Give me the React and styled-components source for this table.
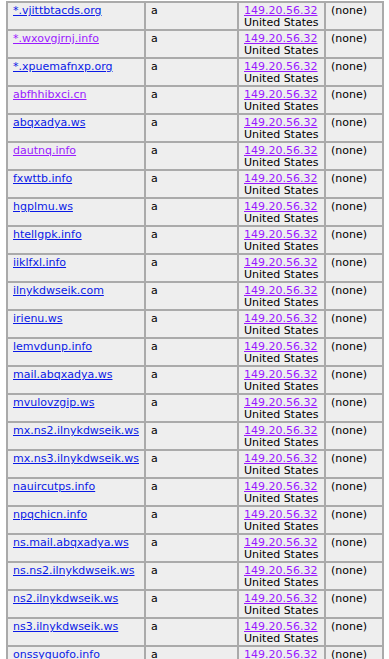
import React from "react";
import styled, { createGlobalStyle } from "styled-components";

const GlobalStyle = createGlobalStyle`
  body {
    margin: 0;
    background: #ffffff;
    font-family: "DejaVu Sans", Verdana, sans-serif;
  }
`;

const rows = [
  { host: "*.vjittbtacds.org" },
  { host: "*.wxovgjrnj.info", visited: true },
  { host: "*.xpuemafnxp.org" },
  { host: "abfhhibxci.cn", visited: true },
  { host: "abqxadya.ws" },
  { host: "dautnq.info", visited: true },
  { host: "fxwttb.info" },
  { host: "hgplmu.ws" },
  { host: "htellgpk.info" },
  { host: "iiklfxl.info" },
  { host: "ilnykdwseik.com" },
  { host: "irienu.ws" },
  { host: "lemvdunp.info" },
  { host: "mail.abqxadya.ws" },
  { host: "mvulovzgip.ws" },
  { host: "mx.ns2.ilnykdwseik.ws" },
  { host: "mx.ns3.ilnykdwseik.ws" },
  { host: "nauircutps.info" },
  { host: "npqchicn.info" },
  { host: "ns.mail.abqxadya.ws" },
  { host: "ns.ns2.ilnykdwseik.ws" },
  { host: "ns2.ilnykdwseik.ws" },
  { host: "ns3.ilnykdwseik.ws" },
  { host: "onssyguofo.info" },
];

function App() {
  return (
    <>
      <GlobalStyle />
      <Page>
        <Table>
          <colgroup>
            <col style={{ width: 136 }} />
            <col style={{ width: 91 }} />
            <col style={{ width: 85 }} />
            <col style={{ width: 56 }} />
          </colgroup>
          <tbody>
            {rows.map((r) => (
              <tr key={r.host}>
                <Cell>
                  <HostLink href="#" $visited={r.visited}>
                    {r.host}
                  </HostLink>
                </Cell>
                <Cell>a</Cell>
                <Cell>
                  <HostLink href="#" $visited>
                    149.20.56.32
                  </HostLink>
                  <br />
                  United States
                </Cell>
                <Cell>(none)</Cell>
              </tr>
            ))}
          </tbody>
        </Table>
      </Page>
    </>
  );
}

export default App;

const Page = styled.div`
  padding: 1px 5px 0 6px;
  height: 659px;
  overflow: hidden;
`;

const Table = styled.table`
  width: 378px;
  table-layout: fixed;
  border-collapse: separate;
  border-spacing: 2px;
  background: #aaaaaa;
  font-size: 11px;
  line-height: 12px;
  color: #000000;
`;

const Cell = styled.td`
  background: #eeeeee;
  vertical-align: top;
  padding: 2px 0 0 5px;
  white-space: nowrap;
  overflow: hidden;

  &:first-child,
  &:nth-child(2),
  &:last-child {
    padding-bottom: 12px;
  }
`;

const HostLink = styled.a`
  color: ${(p) => (p.$visited ? "#9a1aff" : "#0a1ae6")};
  text-decoration: underline;
`;
